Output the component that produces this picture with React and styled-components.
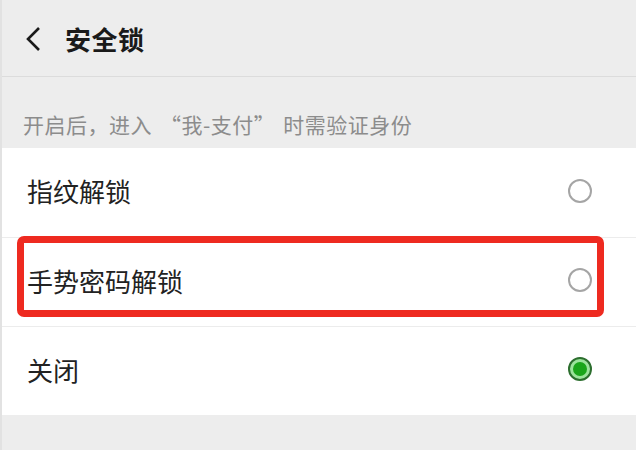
import React from "react";
import styled, { createGlobalStyle } from "styled-components";

const GlobalStyle = createGlobalStyle`
  html, body {
    margin: 0;
    padding: 0;
    background: #ededed;
    font-family: "Noto Sans CJK SC", "Noto Sans", sans-serif;
  }
`;

const Page = styled.div`
  width: 636px;
  height: 450px;
  overflow: hidden;
  background: #ededed;
  border-left: 2px solid #e2e2e2;
  box-sizing: border-box;
`;

const Header = styled.div`
  height: 77px;
  display: flex;
  align-items: center;
  padding-left: 22px;
  border-bottom: 1px solid #dcdcdc;
  box-sizing: border-box;
`;

const Back = styled.span`
  display: flex;
  width: 24px;
  margin-right: 17px;
  margin-top: 1px;
`;

const Title = styled.h1`
  margin: 0;
  font-size: 26px;
  font-weight: 700;
  color: #1a1a1a;
  letter-spacing: 0.5px;
`;

const Caption = styled.div`
  height: 71px;
  display: flex;
  align-items: flex-end;
  padding: 0 0 9px 21px;
  box-sizing: border-box;
  font-size: 21px;
  letter-spacing: 0.5px;
  color: #8c8c8c;
`;

const Quote = styled.span`
  margin: ${(p) => (p.$open ? "0 0 0 8px" : "0 8px 0 0")};
`;

const List = styled.div`
  position: relative;
  background: #fff;
`;

const Row = styled.div`
  height: 89px;
  display: flex;
  align-items: center;
  justify-content: space-between;
  padding: 0 44px 4px 25px;
  box-sizing: border-box;
  border-top: ${(p) => (p.$first ? "none" : "1px solid #ececec")};
  font-size: 26px;
  color: #222;
`;

const Radio = styled.span`
  width: 24px;
  height: 24px;
  border-radius: 50%;
  box-sizing: border-box;
  border: 2px solid ${(p) => (p.$on ? "#2c6e2e" : "#a5a5a5")};
  display: flex;
  align-items: center;
  justify-content: center;
  background: ${(p) => (p.$on ? "#9be39b" : "#fff")};

  &::after {
    content: "";
    display: ${(p) => (p.$on ? "block" : "none")};
    width: 14px;
    height: 14px;
    border-radius: 50%;
    background: #1aa51a;
  }
`;

const Highlight = styled.div`
  position: absolute;
  left: 15px;
  top: 88px;
  width: 587px;
  height: 81px;
  border: 7px solid #ee2a20;
  border-radius: 7px;
  box-sizing: border-box;
  pointer-events: none;
`;

const items = [
  { label: "指纹解锁", on: false },
  { label: "手势密码解锁", on: false },
  { label: "关闭", on: true },
];

export default function App() {
  return (
    <>
      <GlobalStyle />
      <Page>
        <Header>
          <Back>
            <svg width="18" height="26" viewBox="0 0 18 26" fill="none">
              <path d="M15 2 L4 13 L15 24" stroke="#1a1a1a" strokeWidth="2.6" strokeLinejoin="miter" />
            </svg>
          </Back>
          <Title>安全锁</Title>
        </Header>
        <Caption>
          开启后，进入<Quote $open>“</Quote>我-支付<Quote>”</Quote>时需验证身份
        </Caption>
        <List>
          {items.map((it, i) => (
            <Row key={it.label} $first={i === 0}>
              {it.label}
              <Radio $on={it.on} />
            </Row>
          ))}
          <Highlight />
        </List>
      </Page>
    </>
  );
}
